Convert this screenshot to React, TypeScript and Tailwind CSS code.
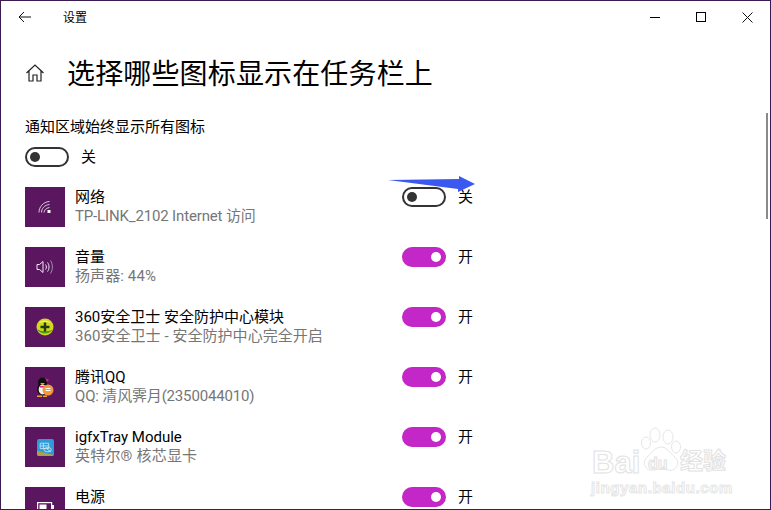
import React from "react";

function Toggle({ on }: { on: boolean }) {
  return on ? (
    <div className="w-[44px] h-[20px] rounded-full bg-[#c427c8] flex items-center justify-end pr-[5px] shrink-0">
      <div className="w-[10px] h-[10px] rounded-full bg-white" />
    </div>
  ) : (
    <div className="w-[44px] h-[20px] rounded-full border-2 border-[#333333] bg-white flex items-center pl-[3px] shrink-0">
      <div className="w-[10px] h-[10px] rounded-full bg-[#333333]" />
    </div>
  );
}

const Wifi = () => (
  <svg width="14" height="14" viewBox="0 0 14 14" fill="none" stroke="#e8dcec" strokeWidth="0.9">
    <path d="M1 12.5C1 7 5 2 11.5 1.5" />
    <path d="M3.5 12.5C3.5 8.5 6.5 5 11.5 4.5" />
    <path d="M6 12.5C6 10.5 8 8 11.5 7.5" />
    <rect x="9.5" y="10" width="3" height="3" fill="#ffffff" stroke="none" />
  </svg>
);

const Speaker = () => (
  <svg width="18" height="16" viewBox="0 0 18 16" fill="none" stroke="#f0e8f2" strokeWidth="1">
    <path d="M1 5.5H3.5L7 2.5V13.5L3.5 10.5H1Z" />
    <path d="M9.5 5.5C10.7 7 10.7 9 9.5 10.5" />
    <path d="M11.5 3.5C13.5 6 13.5 10 11.5 12.5" />
    <path d="M14.5 1.5C17 5 17 11 14.5 14.5" stroke="#a88ab0" />
  </svg>
);

const Guard = () => (
  <svg width="18" height="18" viewBox="0 0 18 18">
    <circle cx="9" cy="9" r="8.5" fill="#d2d81c" />
    <path d="M1 11C3 16 13 18 17 11C14 14 5 14 1 11Z" fill="#4f9a1e" />
    <path d="M3 5C5 1.5 12 1.5 15 5C12 3.5 6 3.5 3 5Z" fill="#f3f08a" />
    <path d="M7.8 4.5H10.2V7.8H13.5V10.2H10.2V13.5H7.8V10.2H4.5V7.8H7.8Z" fill="#1d3a10" />
  </svg>
);

const Penguin = () => (
  <svg width="18" height="20" viewBox="0 0 18 20">
    <ellipse cx="6.5" cy="5.5" rx="4.5" ry="5" fill="#111111" />
    <ellipse cx="6.5" cy="12" rx="5.5" ry="6" fill="#111111" />
    <ellipse cx="6.5" cy="12.5" rx="3.8" ry="5" fill="#f4f0ee" />
    <path d="M4 6H9L6.5 8Z" fill="#f3a51d" />
    <path d="M3 9H11L9 10.5H4Z" fill="#e0208c" />
    <path d="M9 1L13 3L11 5Z" fill="#e0208c" />
    <path d="M1 18.5H6V20H1ZM7 18.5H11V20H7Z" fill="#f3a51d" />
    <circle cx="12" cy="13" r="5.5" fill="#f29a3a" />
    <path d="M9.5 11.5H14.5M9.5 13.5H14.5" stroke="#ffffff" strokeWidth="1" />
  </svg>
);

const Intel = () => (
  <svg width="17" height="17" viewBox="0 0 16 16">
    <rect width="16" height="16" rx="2" fill="#2e9bd8" />
    <path d="M0 11L16 15V14C16 15 15 16 14 16H2C1 16 0 15 0 14Z" fill="#a8a24a" />
    <path d="M3 4H11V9H3ZM6 4V9M3 6.5H11M9 9L13 12" fill="none" stroke="#c5e8f7" strokeWidth="0.8" />
    <ellipse cx="10" cy="10" rx="3.5" ry="2" fill="none" stroke="#d7effa" strokeWidth="0.7" />
  </svg>
);

const Battery = () => (
  <svg width="17" height="10" viewBox="0 0 17 10" fill="none" stroke="#ffffff" strokeWidth="1.2">
    <rect x="0.6" y="0.6" width="14" height="8.8" />
    <rect x="2.5" y="2.5" width="7" height="5" fill="#ffffff" stroke="none" />
    <rect x="15" y="3" width="2" height="4" fill="#ffffff" stroke="none" />
  </svg>
);

const rows = [
  { title: "网络", sub: "TP-LINK_2102 Internet 访问", subClass: "tracking-[-0.15px]", on: false, icon: <Wifi /> },
  { title: "音量", sub: "扬声器: 44%", subClass: "tracking-[0.1px]", on: true, icon: <Speaker /> },
  { title: "360安全卫士 安全防护中心模块", sub: "360安全卫士 - 安全防护中心完全开启", subClass: "tracking-[0.05px]", on: true, icon: <Guard /> },
  { title: "腾讯QQ", sub: "QQ: 清风霁月(2350044010)", subClass: "tracking-[-0.17px]", on: true, icon: <Penguin /> },
  { title: "igfxTray Module", sub: "英特尔® 核芯显卡", subClass: "tracking-[0.2px]", on: true, icon: <Intel /> },
  { title: "电源", sub: "", subClass: "", on: true, icon: <Battery /> },
];

export default function App() {
  return (
    <div className="relative w-[771px] h-[510px] overflow-hidden bg-white border border-[#3c1a52] text-black font-['Roboto','Noto_Sans_CJK_SC',sans-serif] text-[15px] leading-[20px]">
      {/* Title bar */}
      <div className="h-[32px] flex items-center shrink-0">
        <div className="w-[48px] flex justify-center">
          <svg width="14" height="12" viewBox="0 0 14 12" fill="none" stroke="#111" strokeWidth="1">
            <path d="M13 6H1M6 1L1 6L6 11" />
          </svg>
        </div>
        <span className="ml-[14px] pt-[2px] text-[12px]">设置</span>
        <div className="ml-auto flex items-center">
          <div className="w-[46px] flex justify-center">
            <div className="w-[10px] h-px bg-black" />
          </div>
          <div className="w-[46px] flex justify-center">
            <div className="w-[10px] h-[10px] border border-black" />
          </div>
          <div className="w-[46px] flex justify-center">
            <svg width="11" height="11" viewBox="0 0 11 11" stroke="#111" strokeWidth="1">
              <path d="M0.5 0.5L10.5 10.5M10.5 0.5L0.5 10.5" />
            </svg>
          </div>
        </div>
      </div>

      {/* Heading */}
      <div className="mt-[15px] h-[50px] flex items-center pl-[24px]">
        <svg width="20" height="20" viewBox="0 0 20 20" fill="none" stroke="#222" strokeWidth="1.2">
          <path d="M1.5 10L10 2L18.5 10M4 8V18H8V12H12V18H16V8" />
        </svg>
        <h1 className="ml-[22px] pt-[4px] text-[28px] leading-[40px] font-normal tracking-[0.15px]">选择哪些图标显示在任务栏上</h1>
      </div>

      {/* Master switch */}
      <div className="mt-[19px] pl-[24px]">
        <div className="h-[20px] leading-[20px]">通知区域始终显示所有图标</div>
        <div className="mt-[10px] flex items-center gap-[12px]">
          <Toggle on={false} />
          <span>关</span>
        </div>
      </div>

      {/* List */}
      <div className="mt-[20px] pl-[24px] flex flex-col gap-[20px]">
        {rows.map((r) => (
          <div key={r.title} className="flex h-[40px]">
            <div className="w-[40px] h-[40px] bg-[#5b1660] flex items-center justify-center shrink-0">{r.icon}</div>
            <div className="ml-[10px] w-[327px]">
              <div className="leading-[20px]">{r.title}</div>
              {r.sub && <div className={`leading-[19px] text-[#767676] ${r.subClass}`}>{r.sub}</div>}
            </div>
            <div className="h-[20px] flex items-center gap-[12px]">
              <Toggle on={r.on} />
              <span>{r.on ? "开" : "关"}</span>
            </div>
          </div>
        ))}
      </div>

      {/* Scrollbar */}
      <div className="absolute right-[2px] top-[112px] w-[2px] h-[106px] bg-[#8a8a8a]" />

      {/* Annotation arrow */}
      <svg className="absolute left-[386px] top-[173px]" width="90" height="20" viewBox="0 0 90 20">
        <path d="M1 6L72 5V2L88 10L71 18V15Z" fill="#3b58f0" />
      </svg>

      {/* Watermark */}
      <div className="absolute left-[589px] top-[426px] w-[180px] h-[80px] pointer-events-none">
        <svg className="absolute left-[50px] top-0" width="42" height="46" viewBox="0 0 42 46" fill="none" stroke="#e6e6e6" strokeWidth="1">
          <ellipse cx="6" cy="16" rx="4.5" ry="6" />
          <ellipse cx="15" cy="8" rx="5" ry="7" />
          <ellipse cx="28" cy="10" rx="5" ry="7" />
          <ellipse cx="36" cy="20" rx="4.5" ry="6" />
          <path d="M21 20C27 20 30 26 35 30C41 36 36 45 28 43C24 42 18 42 14 43C6 45 1 36 7 30C12 26 15 20 21 20Z" />
        </svg>
        <span className="absolute left-[2px] top-[17px] text-[31px] leading-[38px] font-bold text-transparent [-webkit-text-stroke:1px_#e2e2e2] font-['Liberation_Sans',sans-serif]">Bai</span>
        <span className="absolute left-[58px] top-[27px] text-[16px] leading-[20px] font-bold text-transparent [-webkit-text-stroke:1px_#e2e2e2] font-['Liberation_Sans',sans-serif]">du</span>
        <span className="absolute left-[90px] top-[19px] text-[23px] leading-[32px] font-bold text-transparent [-webkit-text-stroke:1px_#e2e2e2]">经验</span>
        <span className="absolute left-[1px] top-[51px] text-[15px] leading-[20px] font-bold tracking-[0.6px] text-transparent [-webkit-text-stroke:1px_#e6e6e6] font-['Liberation_Sans',sans-serif]">jingyan.baidu.com</span>
      </div>
    </div>
  );
}
